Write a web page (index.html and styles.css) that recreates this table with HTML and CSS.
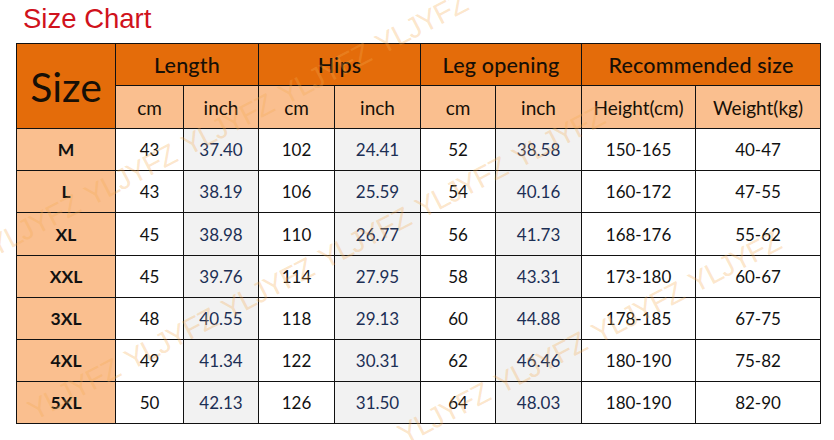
FILE: index.html
```html
<!DOCTYPE html>
<html>
<head>
<meta charset="utf-8">
<link rel="stylesheet" href="styles.css">
</head>
<body>
<div class="page">
  <h1 class="title">Size Chart</h1>
  <table class="chart">
    <colgroup>
      <col class="c-size"><col class="c-len-cm"><col class="c-len-in"><col class="c-hip-cm"><col class="c-hip-in"><col class="c-leg-cm"><col class="c-leg-in"><col class="c-h"><col class="c-w">
    </colgroup>
    <thead>
      <tr class="head1">
        <th rowspan="2" class="size-head">Size</th>
        <th colspan="2">Length</th>
        <th colspan="2">Hips</th>
        <th colspan="2">Leg opening</th>
        <th colspan="2">Recommended size</th>
      </tr>
      <tr class="head2">
        <th>cm</th><th>inch</th><th>cm</th><th>inch</th><th>cm</th><th>inch</th><th>Height(cm)</th><th>Weight(kg)</th>
      </tr>
    </thead>
    <tbody>
      <tr><th>M</th><td>43</td><td class="in">37.40</td><td>102</td><td class="in">24.41</td><td>52</td><td class="in">38.58</td><td>150-165</td><td>40-47</td></tr>
      <tr><th>L</th><td>43</td><td class="in">38.19</td><td>106</td><td class="in">25.59</td><td>54</td><td class="in">40.16</td><td>160-172</td><td>47-55</td></tr>
      <tr><th>XL</th><td>45</td><td class="in">38.98</td><td>110</td><td class="in">26.77</td><td>56</td><td class="in">41.73</td><td>168-176</td><td>55-62</td></tr>
      <tr><th>XXL</th><td>45</td><td class="in">39.76</td><td>114</td><td class="in">27.95</td><td>58</td><td class="in">43.31</td><td>173-180</td><td>60-67</td></tr>
      <tr><th>3XL</th><td>48</td><td class="in">40.55</td><td>118</td><td class="in">29.13</td><td>60</td><td class="in">44.88</td><td>178-185</td><td>67-75</td></tr>
      <tr><th>4XL</th><td>49</td><td class="in">41.34</td><td>122</td><td class="in">30.31</td><td>62</td><td class="in">46.46</td><td>180-190</td><td>75-82</td></tr>
      <tr><th>5XL</th><td>50</td><td class="in">42.13</td><td>126</td><td class="in">31.50</td><td>64</td><td class="in">48.03</td><td>180-190</td><td>82-90</td></tr>
    </tbody>
  </table>
  <div class="watermark" aria-hidden="true">
    <span class="wm wm-a">YLJYFZ YLJYFZ YLJYFZ YLJYFZ YLJYFZ</span>
    <span class="wm wm-b">YLJYFZ YLJYFZ YLJYFZ YLJYFZ YLJYFZ YLJYFZ</span>
    <span class="wm wm-c">YLJYFZ YLJYFZ YLJYFZ YLJYFZ</span>
  </div>
</div>
</body>
</html>
```

FILE: styles.css
```css
html, body {
  margin: 0;
  padding: 0;
  background: #ffffff;
}

.page {
  position: relative;
  width: 834px;
  height: 440px;
  overflow: hidden;
  font-family: Lato, "Open Sans", sans-serif;
}

.title {
  margin: 0;
  height: 43px;
  padding-left: 23px;
  font-family: "Liberation Sans", Arial, sans-serif;
  font-weight: normal;
  font-size: 27.5px;
  line-height: 38px;
  color: #d0121c;
  box-sizing: border-box;
}

.chart {
  margin-left: 16px;
  border-collapse: collapse;
  table-layout: fixed;
  width: 804px;
  color: #111;
}

.chart col.c-size { width: 99px; }
.chart col.c-len-cm { width: 68px; }
.chart col.c-len-in { width: 75px; }
.chart col.c-hip-cm { width: 76px; }
.chart col.c-hip-in { width: 86px; }
.chart col.c-leg-cm { width: 75px; }
.chart col.c-leg-in { width: 86px; }
.chart col.c-h { width: 114px; }
.chart col.c-w { width: 125px; }

.chart th,
.chart td {
  border: 1.5px solid #111;
  padding: 0;
  text-align: center;
  vertical-align: middle;
  white-space: nowrap;
}

.head1 { height: 42px; }
.head2 { height: 43px; }
.chart tbody tr { height: 42px; }
.chart tbody tr:nth-child(3) { height: 43px; }

.head1 th {
  background: #e46c0a;
  font-weight: 500;
  font-size: 21.5px;
  color: #170f06;
  letter-spacing: 0.2px;
}

.head1 th.size-head {
  font-size: 41px;
  font-weight: 400;
  letter-spacing: 0;
}

.head2 th {
  background: #fabf8f;
  font-weight: 400;
  font-size: 19px;
  color: #170f06;
}

.chart tbody th {
  background: #fabf8f;
  font-weight: 700;
  font-size: 17.5px;
  color: #111;
}

.chart tbody td {
  background: #ffffff;
  font-size: 17px;
  color: #111;
}

.chart tbody td.in {
  background: #f2f2f2;
  color: #1c2f55;
}

.watermark {
  position: absolute;
  inset: 0;
  pointer-events: none;
}

.wm {
  position: absolute;
  white-space: nowrap;
  font-family: "Liberation Sans", Arial, sans-serif;
  font-size: 29px;
  color: rgba(245, 170, 80, 0.3);
  transform-origin: 0 50%;
  transform: rotate(-27.5deg);
  letter-spacing: -1px;
  word-spacing: 4px;
}

.wm-a { left: -10px; top: 232px; }
.wm-b { left: 30px; top: 396px; }
.wm-c { left: 400px; top: 420px; }
```
